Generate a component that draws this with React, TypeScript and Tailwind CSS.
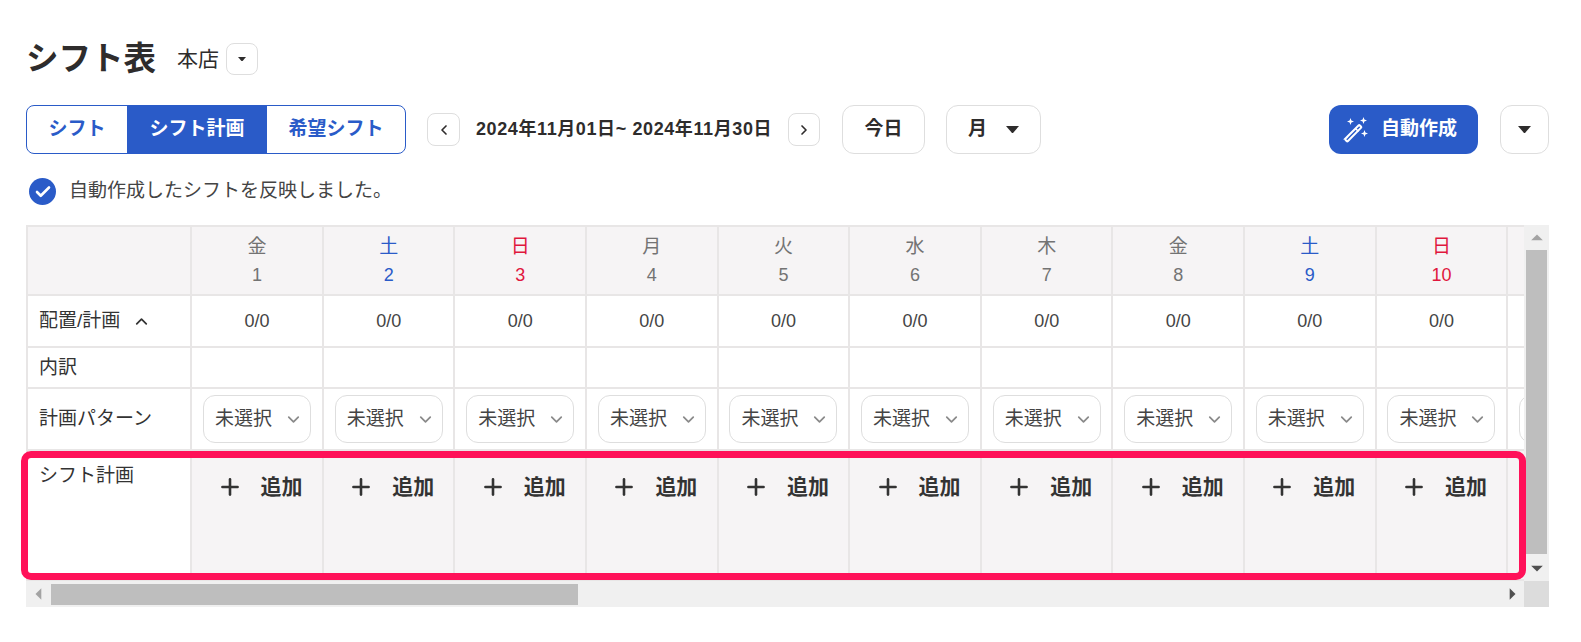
import { ChevronDown, ChevronLeft, ChevronRight, ChevronUp, Check, Plus } from "lucide-react";

const days = [
  { w: "金", d: 1, c: "text-[#737373]" },
  { w: "土", d: 2, c: "text-[#2a5bc8]" },
  { w: "日", d: 3, c: "text-[#e0173d]" },
  { w: "月", d: 4, c: "text-[#737373]" },
  { w: "火", d: 5, c: "text-[#737373]" },
  { w: "水", d: 6, c: "text-[#737373]" },
  { w: "木", d: 7, c: "text-[#737373]" },
  { w: "金", d: 8, c: "text-[#737373]" },
  { w: "土", d: 9, c: "text-[#2a5bc8]" },
  { w: "日", d: 10, c: "text-[#e0173d]" },
];

const Caret = ({ className }: { className?: string }) => (
  <svg viewBox="0 0 12 7" className={className} fill="currentColor">
    <path d="M0 0h12L6 7z" />
  </svg>
);

const Arrow = ({ d, className }: { d: string; className?: string }) => (
  <svg viewBox="0 0 12 12" className={className} fill="currentColor">
    <path d={d} />
  </svg>
);

const WandIcon = () => (
  <svg viewBox="0 0 26 26" className="h-[26px] w-[26px]" fill="none" stroke="white">
    <path d="M2.5 21.5 15.5 8.5a1 1 0 0 1 1.4 0l1 1a1 1 0 0 1 0 1.4L5 24a1 1 0 0 1-1.4 0l-1-1a1 1 0 0 1 0-1.5z" strokeWidth="2" />
    <path d="M12.5 11.5l3 3" strokeWidth="1.6" />
    <g fill="white" stroke="none">
      <path d="M7.5 1l.9 2.6L11 4.5l-2.6.9L7.5 8l-.9-2.6L4 4.5l2.6-.9z" />
      <path d="M20.5 0l.9 2.6 2.6.9-2.6.9-.9 2.6-.9-2.6-2.6-.9 2.6-.9z" />
      <path d="M21.5 13l.9 2.6 2.6.9-2.6.9-.9 2.6-.9-2.6-2.6-.9 2.6-.9z" />
    </g>
  </svg>
);

function Row({
  label,
  height,
  bg,
  labelClass,
  last,
  children,
}: {
  label?: React.ReactNode;
  height: string;
  bg?: string;
  labelClass?: string;
  last?: React.ReactNode;
  children: (day: (typeof days)[number]) => React.ReactNode;
}) {
  return (
    <div className={`flex shrink-0 ${height}`}>
      <div
        className={`flex w-[166.3px] shrink-0 border-r-2 border-b-2 border-l-2 border-[#e8e6e6] pl-[11px] text-[19px] text-[#333] ${labelClass ?? "items-center"} ${bg ?? ""}`}
      >
        {label}
      </div>
      {days.map((day, i) => (
        <div
          key={i}
          className={`flex w-[131.6px] shrink-0 justify-center border-r-2 border-b-2 border-[#e8e6e6] ${bg ?? ""}`}
        >
          {children(day)}
        </div>
      ))}
      {/* 11th day, only its left edge is in view */}
      <div className={`flex w-[131.6px] shrink-0 justify-center border-r-2 border-b-2 border-[#e8e6e6] ${bg ?? ""}`}>
        {last}
      </div>
    </div>
  );
}

export default function App() {
  return (
    <div
      className="h-[642px] w-[1581px] overflow-hidden bg-white pr-[32px] pl-[26px] text-[#2e2c2c]"
      style={{ fontFamily: "'Liberation Sans', 'Noto Sans CJK JP', sans-serif" }}
    >
      {/* title */}
      <div className="flex items-center pt-[43px]">
        <h1 className="text-[32.5px] leading-[31px] font-bold">シフト表</h1>
        <span className="ml-[21px] pb-[1px] text-[21px] leading-[30px]">本店</span>
        <button className="ml-[7px] flex h-[32px] w-[32px] items-center justify-center rounded-lg border border-[#dedede]">
          <Caret className="w-[8px]" />
        </button>
      </div>

      {/* toolbar */}
      <div className="mt-[30px] flex h-[49px] items-center">
        <div className="flex h-[49px] w-[380px] overflow-hidden rounded-lg border border-[#2a5bc8] text-[19px] font-bold text-[#2a5bc8]">
          <div className="flex w-[100px] items-center justify-center">シフト</div>
          <div className="flex w-[140px] items-center justify-center bg-[#2a5bc8] text-white">シフト計画</div>
          <div className="flex flex-1 items-center justify-center">希望シフト</div>
        </div>
        <button className="ml-[21px] flex h-[33px] w-[33px] items-center justify-center rounded-lg border border-[#dedede]">
          <ChevronLeft size={16} strokeWidth={2.5} />
        </button>
        <span className="ml-[16px] w-[296px] text-[18px] font-bold tracking-[0.6px] whitespace-nowrap">2024年11月01日~ 2024年11月30日</span>
        <button className="ml-[16px] flex h-[33px] w-[32px] items-center justify-center rounded-lg border border-[#dedede]">
          <ChevronRight size={16} strokeWidth={2.5} />
        </button>
        <button className="ml-[22px] flex h-[49px] w-[83px] items-center justify-center rounded-xl border border-[#dedede] text-[19px] font-bold">
          今日
        </button>
        <button className="ml-[21px] flex h-[49px] w-[95px] items-center justify-center gap-[19px] rounded-xl border border-[#dedede] text-[19px] font-bold">
          月<Caret className="w-[13px]" />
        </button>
        <button className="ml-auto flex h-[49px] w-[149px] items-center gap-[12px] rounded-xl bg-[#2a5bc8] pl-[14px] text-[19px] font-bold text-white">
          <WandIcon />
          自動作成
        </button>
        <button className="ml-[22px] flex h-[49px] w-[49px] items-center justify-center rounded-xl border border-[#dedede]">
          <Caret className="w-[13px]" />
        </button>
      </div>

      {/* notice */}
      <div className="mt-[24px] ml-[3px] flex h-[27px] items-center gap-[13px] text-[19px] text-[#444]">
        <span className="flex h-[27px] w-[27px] items-center justify-center rounded-full bg-[#2a5bc8]">
          <Check size={18} strokeWidth={3.5} className="text-white" />
        </span>
        自動作成したシフトを反映しました。
      </div>

      {/* table */}
      <div className="relative mt-[20px] grid w-[1523px] grid-cols-[1498px_25px] grid-rows-[356px_26px]">
        <div className="overflow-hidden border-t-2 border-[#e8e6e6]">
          <div className="flex w-[1700px] flex-col">
            <Row height="h-[69px]" bg="bg-[#f6f4f5]">
              {(day) => (
                <div className={`flex flex-col items-center pt-[5px] text-[19px] leading-[29px] ${day.c}`}>
                  <span>{day.w}</span>
                  <span className="text-[18px]">{day.d}</span>
                </div>
              )}
            </Row>
            <Row
              height="h-[52px]"
              label={
                <span className="flex items-center gap-[12px]">
                  配置/計画 <ChevronUp size={19} strokeWidth={2.2} />
                </span>
              }
            >
              {() => <span className="self-center text-[18px] text-[#444]">0/0</span>}
            </Row>
            <Row height="h-[41px]" label={<span className="pt-[2px]">内訳</span>}>
              {() => null}
            </Row>
            <Row
              height="h-[62px]"
              label="計画パターン"
              last={<div className="mt-[6px] h-[48px] w-[108px] rounded-xl border border-[#dedede]" />}
            >
              {() => (
                <div className="mt-[6px] flex h-[48px] w-[108px] items-center justify-between rounded-xl border border-[#dedede] pr-[7px] pl-[11px] text-[19px] text-[#444]">
                  未選択
                  <ChevronDown size={19} strokeWidth={2.2} className="text-[#8a8a8a]" />
                </div>
              )}
            </Row>
            <Row height="h-[130px]" bg="bg-[#f6f4f5]" label="シフト計画" labelClass="items-start bg-white pt-[11px]">
              {() => (
                <div className="flex h-[50px] items-center gap-[18px] pt-[22px] pl-[5px] text-[21px] font-bold text-[#333]">
                  <Plus size={26} strokeWidth={2.4} />
                  追加
                </div>
              )}
            </Row>
          </div>
        </div>

        {/* vertical scrollbar */}
        <div className="flex flex-col items-center bg-[#f0f0f0] text-[#a3a3a3]">
          <div className="flex h-[25px] items-center justify-center">
            <Arrow d="M6 3l5 5H1z" className="w-[14px]" />
          </div>
          <div className="h-[304px] w-[21px] bg-[#bebebe]" />
          <div className="flex flex-1 items-center justify-center text-[#505050]">
            <Arrow d="M1 4h10l-5 5z" className="w-[14px]" />
          </div>
        </div>

        {/* horizontal scrollbar */}
        <div className="flex items-center bg-[#f0f0f0] text-[#a3a3a3]">
          <div className="flex w-[25px] justify-center">
            <Arrow d="M8 1v10L3 6z" className="w-[14px]" />
          </div>
          <div className="h-[21px] w-[527px] bg-[#bebebe]" />
          <div className="ml-auto flex w-[25px] justify-center text-[#505050]">
            <Arrow d="M4 1v10l5-5z" className="w-[14px]" />
          </div>
        </div>
        <div className="bg-[#dcdcdc]" />

        {/* highlight */}
        <div className="pointer-events-none absolute top-[226px] left-[-5px] h-[129px] w-[1505px] rounded-[10px] border-[7px] border-[#ff1159]" />
      </div>
    </div>
  );
}
